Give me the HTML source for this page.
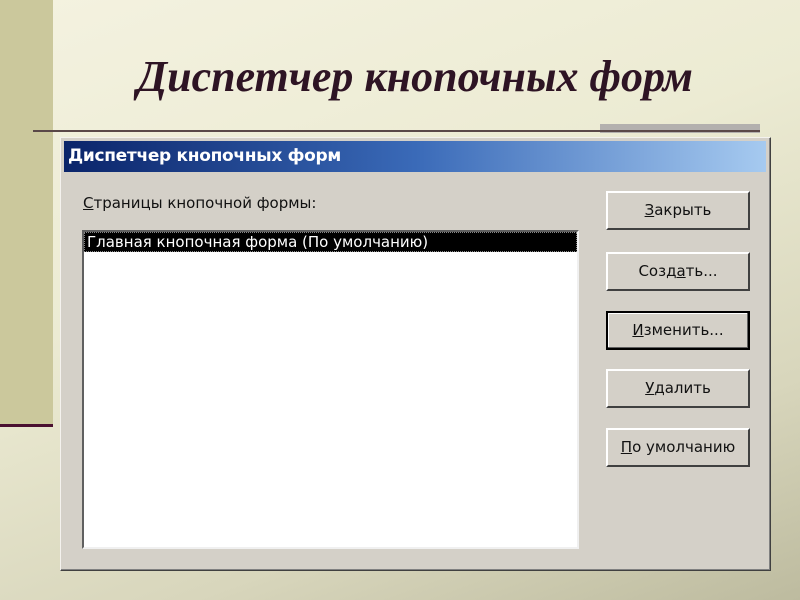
<!DOCTYPE html>
<html><head><meta charset="utf-8"><style>
body{margin:0;width:800px;height:600px;overflow:hidden;position:relative;background:linear-gradient(160deg,#f4f2e0 0%,#ecebd3 40%,#d8d6bc 75%,#bdbb9f 100%);font-family:"Liberation Sans","DejaVu Sans",sans-serif}
.strip{position:absolute;left:0;top:0;width:53px;height:425px;background:#cbc89c}
.mline{position:absolute;left:0;top:424px;width:53px;height:3px;background:#4a1030}
.hline{position:absolute;left:33px;top:130px;width:727px;height:2px;background:#5a4848}
.grect{position:absolute;left:600px;top:124px;width:160px;height:9px;background:#b3b0ae}
h1{position:absolute;left:0;width:800px;top:51px;margin:0;text-align:center;font:bold italic 44px "Liberation Serif",serif;color:#2e1424;padding-left:30px;box-sizing:border-box}
.dlg{position:absolute;left:60px;top:137px;width:711px;height:434px;background:#d4d0c8;box-sizing:border-box;border:1px solid;border-color:#f4f2ee #404040 #404040 #f4f2ee;box-shadow:inset -1px -1px 0 #808080}
.tb{position:absolute;left:3px;top:3px;right:4px;height:31px;background:linear-gradient(90deg,#0a246a,#3a6ab8 50%,#a6caf0);color:#fff;font-weight:bold;font-size:17px;line-height:31px;padding-left:4px;font-family:"DejaVu Sans",sans-serif;letter-spacing:-0.3px}
.lbl{position:absolute;left:22px;top:56px;font-size:15px;color:#111;font-family:"DejaVu Sans",sans-serif}
.lb{position:absolute;left:21px;top:92px;width:497px;height:319px;background:#fff;box-sizing:border-box;border:2px solid;border-color:#606060 #f0f0f0 #f0f0f0 #606060}
.sel{background:#000;color:#fff;font-size:15px;height:20px;line-height:20px;padding-left:3px;font-family:"DejaVu Sans",sans-serif;outline:1px dotted #888;outline-offset:-1px}
.btn{position:absolute;left:545px;width:144px;height:39px;box-sizing:border-box;border:2px solid;border-color:#fff #404040 #404040 #fff;background:#d4d0c8;text-align:center;line-height:35px;font-size:15px;color:#111;font-family:"DejaVu Sans",sans-serif}
.def{border:2px solid #000;box-shadow:inset -1px -1px 0 #606060,inset 1px 1px 0 #fff}
u{text-decoration:underline}
</style></head><body>
<div class="strip"></div><div class="mline"></div>
<div class="grect"></div><div class="hline"></div>
<h1>Диспетчер кнопочных форм</h1>
<div class="dlg">
<div class="tb">Диспетчер кнопочных форм</div>
<div class="lbl"><u>С</u>траницы кнопочной формы:</div>
<div class="lb"><div class="sel">Главная кнопочная форма (По умолчанию)</div></div>
<div class="btn" style="top:53px"><u>З</u>акрыть</div>
<div class="btn" style="top:114px">Созд<u>а</u>ть...</div>
<div class="btn def" style="top:173px"><u>И</u>зменить...</div>
<div class="btn" style="top:231px"><u>У</u>далить</div>
<div class="btn" style="top:290px"><u>П</u>о умолчанию</div>
</div>
</body></html>
